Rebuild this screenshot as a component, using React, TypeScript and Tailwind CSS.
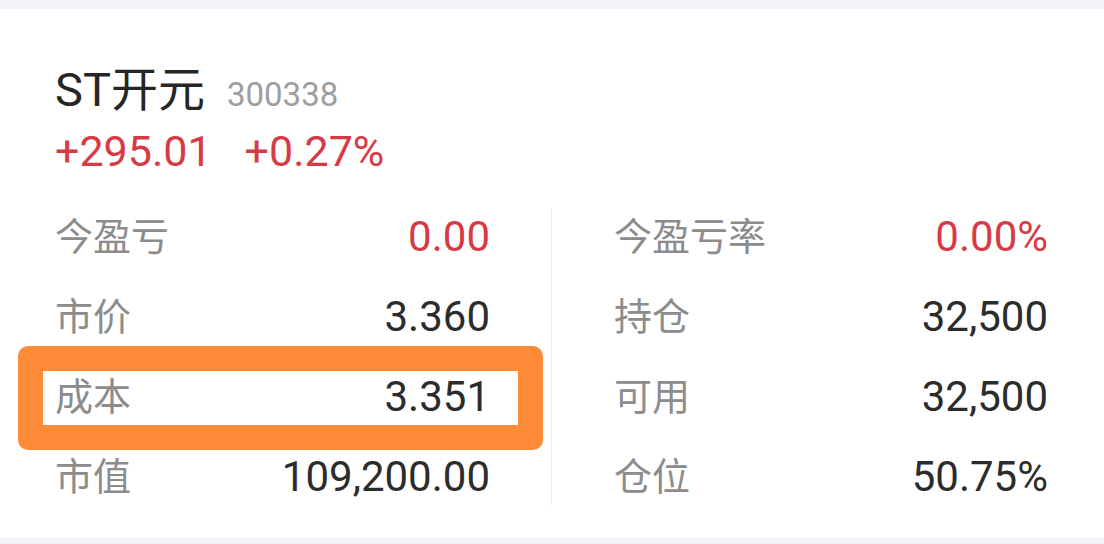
import React from "react";

const font = "font-[Roboto,'Noto_Sans_CJK_SC',sans-serif]";

type Row = { label: string; value: string; red?: boolean; highlight?: boolean };

const left: Row[] = [
  { label: "今盈亏", value: "0.00", red: true },
  { label: "市价", value: "3.360" },
  { label: "成本", value: "3.351", highlight: true },
  { label: "市值", value: "109,200.00" },
];

const right: Row[] = [
  { label: "今盈亏率", value: "0.00%", red: true },
  { label: "持仓", value: "32,500" },
  { label: "可用", value: "32,500" },
  { label: "仓位", value: "50.75%" },
];

function Cell({ row }: { row: Row }) {
  return (
    <div className="relative h-[80px] flex items-center justify-between">
      {row.highlight && (
        <div className="absolute left-[-37px] right-[-53px] top-[-11px] h-[104px] border-[25px] border-[#fd8b37] rounded-[10px]" />
      )}
      <span className="relative text-[38px] leading-none text-[#8c8c8c]">{row.label}</span>
      <span className={`relative text-[42px] leading-none ${row.red ? "text-[#d83a45]" : "text-[#2c2c2c]"}`}>
        {row.value}
      </span>
    </div>
  );
}

export default function App() {
  return (
    <div className={`w-[1104px] h-[544px] bg-white flex flex-col overflow-hidden ${font}`}>
      <div className="h-[9px] bg-[#f4f4f8]" />
      <div className="flex-1 flex flex-col pl-[55px]">
        <div className="mt-[57px] flex items-baseline h-[47px]">
          <span className="text-[47px] leading-none text-[#262626]">ST开元</span>
          <span className="ml-[22px] text-[33px] leading-none text-[#9e9e9e]">300338</span>
        </div>
        <div className="mt-[17px] flex gap-[33px] text-[43px] leading-none text-[#d83a45]">
          <span>+295.01</span>
          <span>+0.27%</span>
        </div>
        <div className="mt-[24px] flex">
          <div className="w-[435px] flex flex-col">
            {left.map((r) => (
              <Cell key={r.label} row={r} />
            ))}
          </div>
          <div className="ml-[61px] w-px bg-[#f0f0f0] my-[11px]" />
          <div className="ml-[62px] w-[434px] flex flex-col">
            {right.map((r) => (
              <Cell key={r.label} row={r} />
            ))}
          </div>
        </div>
      </div>
      <div className="h-[6px] bg-[#f4f4f8]" />
    </div>
  );
}
